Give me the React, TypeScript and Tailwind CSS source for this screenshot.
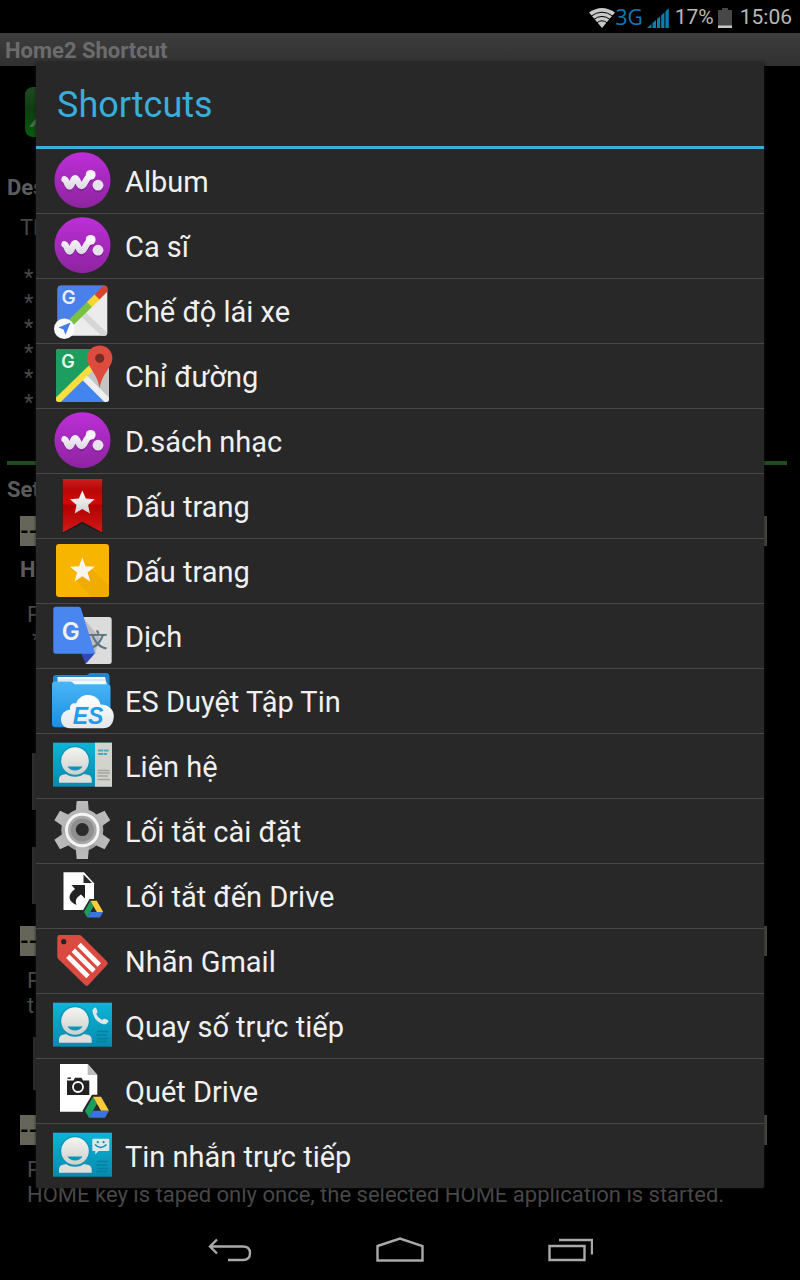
import type { ReactNode } from 'react';

interface Shortcut {
  label: string;
  icon: ReactNode;
}

const WalkmanIcon = () => (
  <svg viewBox="0 0 64 64" className="w-16 h-16 shrink-0" aria-hidden="true">
    <defs>
      <linearGradient id="walkman" x1="0" y1="0" x2="0" y2="1">
        <stop offset="0" stopColor="#bd2fd8" />
        <stop offset="1" stopColor="#8d249f" />
      </linearGradient>
      <linearGradient id="walkmanBlob" gradientUnits="userSpaceOnUse" x1="0" y1="21" x2="0" y2="42">
        <stop offset="0" stopColor="#ffffff" />
        <stop offset="1" stopColor="#d9d3df" />
      </linearGradient>
    </defs>
    <circle cx="32.5" cy="31.2" r="28" fill="url(#walkman)" />
    <g transform="translate(0 1.6)" fill="#6f1a80" stroke="#6f1a80" opacity="0.5">
      <path d="M14.3 30 L19.5 37.8 L25 29.5 L31.5 37.8 L40 27" fill="none" strokeWidth="6" strokeLinecap="round" strokeLinejoin="round" />
      <circle cx="48" cy="36.3" r="5" />
    </g>
    <path
      d="M14.5 30.3 C17 31 17 37.5 19.6 37.5 C22.5 37.5 22.5 29.2 25 29.2 C28 29.2 28.3 37 31.5 37 C35 37 35 29.5 40.5 26.5"
      fill="none"
      stroke="url(#walkmanBlob)"
      strokeWidth="6.4"
      strokeLinecap="round"
      strokeLinejoin="round"
    />
    <circle cx="40.7" cy="25.8" r="4.9" fill="#f8f5fa" />
    <circle cx="48" cy="36.2" r="5.4" fill="#e6e1ea" />
  </svg>
);

const DrivingIcon = () => (
  <svg viewBox="0 0 64 64" className="w-16 h-16 shrink-0" aria-hidden="true">
    <defs>
      <clipPath id="drivingClip">
        <rect x="7.7" y="6.7" width="49.6" height="50" rx="3" />
      </clipPath>
    </defs>
    <g clipPath="url(#drivingClip)">
      <rect x="7" y="6" width="52" height="52" fill="#ececec" />
      <path d="M34 36 L58 59" stroke="#d6d6d6" strokeWidth="6" />
      <path d="M7 6 H56 L7 54 Z" fill="#4a80ec" />
      <path d="M16 48.5 L41 24" stroke="#7ac143" strokeWidth="7" />
      <path d="M39.5 25.5 L48 17" stroke="#fdd32f" strokeWidth="7" />
      <path d="M47 18 L62 3" stroke="#d8432f" strokeWidth="7" />
    </g>
    <text x="18.7" y="25" textAnchor="middle" fontFamily="Inter, sans-serif" fontWeight="600" fontSize="19" fill="#e8f0ff">G</text>
    <circle cx="14.3" cy="49.7" r="10.3" fill="#fafafa" />
    <path d="M20.5 43.5 L8.5 48.5 L13.5 50.5 L15.5 55.8 Z" fill="#3f7de8" />
  </svg>
);

const MapsIcon = () => (
  <svg viewBox="0 0 64 64" className="w-16 h-16 shrink-0" aria-hidden="true">
    <defs>
      <clipPath id="mapsClip">
        <rect x="6" y="5" width="53" height="53" rx="3" />
      </clipPath>
    </defs>
    <g clipPath="url(#mapsClip)">
      <rect x="6" y="5" width="53" height="53" fill="#c4c4c4" />
      <path d="M6 5 H54 L33 31 L6 56 Z" fill="#1d9e60" />
      <path d="M33 33 L60 59 H6 Z" fill="#4285ee" />
      <path d="M31 30 L60 59" stroke="#eeeeee" strokeWidth="6.5" />
      <path d="M5 59 L44 21" stroke="#fede3f" strokeWidth="6.5" />
    </g>
    <text x="18" y="24.2" textAnchor="middle" fontFamily="Inter, sans-serif" fontWeight="600" fontSize="18" fill="#e6fff1">G</text>
    <path d="M49.7 1.5 C42.5 1.5 37 7 37 14.2 C37 23 47.5 29 49.7 44.5 C51.9 29 62.4 23 62.4 14.2 C62.4 7 57 1.5 49.7 1.5 Z" fill="#dd4b3e" />
    <circle cx="49.7" cy="14.3" r="4.6" fill="#792b22" />
  </svg>
);

const RibbonIcon = () => (
  <svg viewBox="0 0 64 64" className="w-16 h-16 shrink-0" aria-hidden="true">
    <defs>
      <linearGradient id="ribbon" x1="0" y1="0" x2="0" y2="1">
        <stop offset="0" stopColor="#cf1d1d" />
        <stop offset="0.2" stopColor="#b80808" />
        <stop offset="0.45" stopColor="#d40707" />
        <stop offset="0.5" stopColor="#b30000" />
        <stop offset="1" stopColor="#d21a1a" />
      </linearGradient>
      <linearGradient id="ribbonStar" x1="0" y1="0" x2="0" y2="1">
        <stop offset="0" stopColor="#ffffff" />
        <stop offset="1" stopColor="#cfcfcf" />
      </linearGradient>
    </defs>
    <path d="M12 6 H53 V60 L32.3 49.5 L12 60 Z" fill="#151515" opacity="0.7" />
    <path d="M12.7 5 H52.3 V58.5 L32.3 47.7 L12.7 58.5 Z" fill="url(#ribbon)" />
    <path d="M32.3 16.5 L35.8 24.4 L44.6 25.2 L38.1 31 L40 39.5 L32.3 35.1 L24.7 39.5 L26.5 31 L20 25.2 L28.9 24.4 Z" fill="url(#ribbonStar)" />
  </svg>
);

const BookmarkIcon = () => (
  <svg viewBox="0 0 64 64" className="w-16 h-16 shrink-0" aria-hidden="true">
    <rect x="6" y="5" width="53" height="53" rx="3" fill="#f7b500" />
    <path d="M38 27 L59 47 V55 Q59 58 56 58 H42 L25.5 41.5 Z" fill="#f0ac00" />
    <path d="M32.3 18.5 L35.6 27.3 L44.8 27.7 L37.6 33.4 L40.2 42.5 L32.3 37.3 L24.6 42.5 L27.1 33.4 L20 27.7 L29.1 27.3 Z" fill="#f8f5ee" />
  </svg>
);

const TranslateIcon = () => (
  <svg viewBox="0 0 64 64" className="w-16 h-16 shrink-0" aria-hidden="true">
    <path d="M30 13 H59 Q61.7 13 61.7 15.7 V57.5 Q61.7 60 59 60 H35.7 Z" fill="#dcdcdc" />
    <path d="M34 15 L50 34 L45 49.7 Z" fill="#bdbdc2" />
    <text x="47.5" y="44" textAnchor="middle" fontFamily='"Noto Sans CJK SC", sans-serif' fontWeight="500" fontSize="20" fill="#5a737d">文</text>
    <path d="M31 49 H45.2 L35.7 60 Z" fill="#3547b5" />
    <path d="M6 2.7 H28.5 Q30.5 2.7 31 4.5 L45.2 49.7 H6 Q3.3 49.7 3.3 47 V5.4 Q3.3 2.7 6 2.7 Z" fill="#4a86f0" />
    <text x="20.7" y="36" textAnchor="middle" fontFamily="Inter, sans-serif" fontWeight="600" fontSize="24" fill="#f2f2f2">G</text>
  </svg>
);

const ExplorerIcon = () => (
  <svg viewBox="0 0 64 64" className="w-16 h-16 shrink-0" aria-hidden="true">
    <defs>
      <linearGradient id="folder" x1="0" y1="0" x2="0" y2="1">
        <stop offset="0" stopColor="#4ab6f7" />
        <stop offset="1" stopColor="#1b8fe0" />
      </linearGradient>
      <linearGradient id="cloud" x1="0" y1="0" x2="0" y2="1">
        <stop offset="0" stopColor="#ffffff" />
        <stop offset="1" stopColor="#e3e7ea" />
      </linearGradient>
    </defs>
    <path d="M3 20 V9 Q3 6 6 6 H37 L40 4 H56 Q59.5 4 59.5 7.5 V25 H3 Z" fill="#2184cc" />
    <path d="M7.5 8 H55 L57 16 V18 H7.5 Z" fill="#f4f8fa" />
    <path d="M8 11 H56" stroke="#a8d3ef" strokeWidth="0.8" />
    <path d="M2 15 Q2 12.5 5 12.5 H20.5 Q22 12.5 23.3 14 L24.7 15.3 H57.5 Q60.5 15.3 60.5 18.5 V55 Q60.5 58.3 57 58.3 H5.5 Q2 58.3 2 55 Z" fill="url(#folder)" />
    <path d="M20 59.3 C14 59.3 11 55 11 50.5 C11 45 14.5 41.3 20 40.7 C19.5 35.5 22.5 34 26 34.4 C28.5 28.5 33 26 38 26 C44.5 26 49.5 30 50.5 35.5 C58 35.5 63.8 40 63.8 47 C63.8 54.5 59.5 59.3 53 59.3 Z" fill="url(#cloud)" />
    <text x="38" y="55" textAnchor="middle" fontFamily='"Liberation Sans", sans-serif' fontStyle="italic" fontWeight="700" fontSize="23" fill="#229be8">ES</text>
  </svg>
);

// Shared blue contact card, the children go on the right hand side
const ContactCard = ({ children }: { children: ReactNode }) => (
  <svg viewBox="0 0 64 64" className="w-16 h-16 shrink-0" aria-hidden="true">
    <defs>
      <linearGradient id="card" x1="0" y1="0" x2="0" y2="1">
        <stop offset="0" stopColor="#0cb5d8" />
        <stop offset="1" stopColor="#078aae" />
      </linearGradient>
      <linearGradient id="person" x1="0" y1="0" x2="0" y2="1">
        <stop offset="0" stopColor="#f4f4f2" />
        <stop offset="1" stopColor="#cfcfcb" />
      </linearGradient>
    </defs>
    <rect x="3" y="8.7" width="59" height="44" fill="url(#card)" />
    <path d="M9 48.7 V45 Q9.5 41 14 40.6 L19 39.5 H31 L36.5 40.6 Q41.2 41 41.7 45 V48.7 Z" fill="#dededa" />
    <circle cx="25" cy="27.3" r="15.4" fill="#0996b9" />
    <circle cx="25" cy="27" r="13.8" fill="url(#person)" />
    <path d="M17.5 32.6 H32.5 Q30 36.6 25 36.6 Q20 36.6 17.5 32.6 Z" fill="#0b96b9" />
    {children}
  </svg>
);

const ContactsIcon = () => (
  <ContactCard>
    <rect x="45" y="8.7" width="17" height="44" fill="#d3d3ce" />
    <path d="M48 16.5 H59 M48 20 H57" stroke="#48a9c4" strokeWidth="2" strokeDasharray="5 0.6" />
    <path d="M47.5 36.5 H59.5 M47.5 39 H60 M47.5 42 H58 M47.5 45.5 H60" stroke="#a2a29e" strokeWidth="1.3" />
  </ContactCard>
);

const DialIcon = () => (
  <ContactCard>
    <path d="M47 37.5 H58 M46 41 H57 M47 44.5 H58 M46 47.5 H57" stroke="#067f9f" strokeWidth="1.6" />
    <path d="M42.3 16 L45 13.6 Q46.3 13.4 47.5 17.4 Q47.2 19 46.2 19.8 Q48 24 52.3 26 Q53.2 24.7 54.7 24.8 Q58.5 25.8 58.6 27.5 Q56.5 30.6 53.4 30.2 Q43.5 27.5 42.3 16 Z" fill="#dfe6e6" />
  </ContactCard>
);

const MessageIcon = () => (
  <ContactCard>
    <path d="M47 37.5 H58 M46 41 H57 M47 44.5 H58 M46 47.5 H57" stroke="#067f9f" strokeWidth="1.6" />
    <path d="M43.3 14.7 H58.3 Q59.3 14.7 59.3 15.7 V26 Q59.3 27 58.3 27 H48.5 L45.3 30.5 V27 H43.3 Q42.3 27 42.3 26 V15.7 Q42.3 14.7 43.3 14.7 Z" fill="#dfe6e6" />
    <path d="M45 20.5 Q50.7 26.5 56.5 20.5" fill="none" stroke="#078fb2" strokeWidth="1.4" />
    <circle cx="47.8" cy="18.2" r="1.1" fill="#078fb2" />
    <circle cx="53.6" cy="18.2" r="1.1" fill="#078fb2" />
  </ContactCard>
);

const GearIcon = () => (
  <svg viewBox="0 0 64 64" className="w-16 h-16 shrink-0" aria-hidden="true">
    <defs>
      <linearGradient id="gear" gradientUnits="userSpaceOnUse" x1="0" y1="2" x2="0" y2="60">
        <stop offset="0" stopColor="#bcbcbc" />
        <stop offset="1" stopColor="#989898" />
      </linearGradient>
    </defs>
    <g fill="url(#gear)">
      <circle cx="32.3" cy="31" r="21" />
      {[0, 60, 120, 180, 240, 300].map((angle) => (
        <path key={angle} d="M26.7 2 H37.9 L39 14 H25.6 Z" transform={`rotate(${angle} 32.3 31)`} />
      ))}
    </g>
    <circle cx="32.3" cy="31" r="15.8" fill="#a9a9a9" stroke="#f4f4f4" strokeWidth="3" />
    <circle cx="32.3" cy="31" r="11.5" fill="#8e8e8e" />
    <circle cx="32.3" cy="30.6" r="6.5" fill="#2b2b2b" />
  </svg>
);

const DriveLogo = () => (
  <>
    <path d="M7 -2 H17 L26 14 L22 23 H3 L-2.5 14 Z" fill="#282828" />
    <path d="M8 0 L12 7 L4 21 L0 14 Z" fill="#1b9e5d" />
    <path d="M8 0 H16 L24 14 H16 Z" fill="#fbcb3c" />
    <path d="M8 14 H24 L20 21 H4 Z" fill="#3b74e0" />
  </>
);

const DriveShortcutIcon = () => (
  <svg viewBox="0 0 64 64" className="w-16 h-16 shrink-0" aria-hidden="true">
    <path d="M13.5 8.3 H34 L44 19.3 V46 H13.5 Z" fill="#ffffff" />
    <path d="M33.5 10.5 V19 H42 Z" fill="#282828" />
    <path d="M21.5 21 H35 V34.5 L31 30.5 C26 34 25 36 26.5 41 C18 37.5 17 31 25 25 Z" fill="#222222" />
    <g transform="translate(34 36.7) scale(0.8)">
      <DriveLogo />
    </g>
  </svg>
);

const DriveScanIcon = () => (
  <svg viewBox="0 0 64 64" className="w-16 h-16 shrink-0" aria-hidden="true">
    <path d="M10 5 H37.7 L47.3 16 V52.7 H10 Z" fill="#ffffff" />
    <path d="M37.7 5 V16 H47.3 Z" fill="#bcbcbc" />
    <path d="M17 21.5 H23.5 L25 18.7 H31.5 L33 21.5 H39.3 V36 H17 Z" fill="#222222" />
    <path d="M17.5 19.2 H21" stroke="#222222" strokeWidth="1.4" />
    <circle cx="28" cy="28" r="5" fill="#222222" stroke="#ffffff" strokeWidth="1.8" />
    <g transform="translate(35 37.7)">
      <DriveLogo />
    </g>
  </svg>
);

const LabelIcon = () => (
  <svg viewBox="0 0 64 64" className="w-16 h-16 shrink-0" aria-hidden="true">
    <path d="M9.5 6 H29 Q30.5 6 31.5 7 L57 32.5 Q58.7 34.3 57 36 L38.4 56 Q36.7 57.7 35 56 L8.3 30 Q7.3 29 7.3 27.5 V8.2 Q7.3 6 9.5 6 Z" fill="#db4a40" />
    <circle cx="13.7" cy="12.7" r="2.6" fill="#242424" />
    <path d="M17.8 27.3 L38 47.5 M23.3 21.2 L44 42 M29 15.5 L49.3 36" stroke="#ffffff" strokeWidth="4.8" />
  </svg>
);

const shortcuts: Shortcut[] = [
  { label: 'Album', icon: <WalkmanIcon /> },
  { label: 'Ca sĩ', icon: <WalkmanIcon /> },
  { label: 'Chế độ lái xe', icon: <DrivingIcon /> },
  { label: 'Chỉ đường', icon: <MapsIcon /> },
  { label: 'D.sách nhạc', icon: <WalkmanIcon /> },
  { label: 'Dấu trang', icon: <RibbonIcon /> },
  { label: 'Dấu trang', icon: <BookmarkIcon /> },
  { label: 'Dịch', icon: <TranslateIcon /> },
  { label: 'ES Duyệt Tập Tin', icon: <ExplorerIcon /> },
  { label: 'Liên hệ', icon: <ContactsIcon /> },
  { label: 'Lối tắt cài đặt', icon: <GearIcon /> },
  { label: 'Lối tắt đến Drive', icon: <DriveShortcutIcon /> },
  { label: 'Nhãn Gmail', icon: <LabelIcon /> },
  { label: 'Quay số trực tiếp', icon: <DialIcon /> },
  { label: 'Quét Drive', icon: <DriveScanIcon /> },
  { label: 'Tin nhắn trực tiếp', icon: <MessageIcon /> },
];

const StatusBar = () => (
  <header className="h-[33px] pt-0.5 flex items-center justify-end pr-2 text-[21px] leading-[31px] text-[#b9b9b9]">
    <svg viewBox="0 0 26 20" className="w-[26px] h-5" aria-hidden="true">
      <path d="M0 4.6 Q13 -4.4 26 4.6 L13 20 Z" fill="#c8c8c8" />
      <path d="M2 8.2 Q13 0.2 24 8.2 M4.6 11.6 Q13 5.2 21.4 11.6 M7.6 15 Q13 10.6 18.4 15" fill="none" stroke="#000000" strokeWidth="1" />
    </svg>
    <span className="font-['Open_Sans',sans-serif] text-[#0c7db2] mr-1">3G</span>
    <svg viewBox="0 0 22 20" className="w-[22px] h-5 mr-1.5" aria-hidden="true">
      <path d="M0 20 L4.5 16 V20 Z M5.5 15 L9 12 V20 H5.5 Z M10 11 L13.2 8.3 V20 H10 Z M14.2 7.2 L17.4 4.4 V20 H14.2 Z M18.4 3.4 L21.8 0.2 V20 H18.4 Z" fill="#0c7db2" />
    </svg>
    <span className="mr-1">17%</span>
    <svg viewBox="0 0 14 20" className="w-3.5 h-5 mr-2" aria-hidden="true">
      <path d="M4 0 H10 V2 H14 V18 H0 V2 H4 Z" fill="#474747" />
      <rect y="17.5" width="14" height="2.5" fill="#c8c8c8" />
    </svg>
    <span>15:06</span>
  </header>
);

const Strip = () => (
  <div className="ml-5 mr-[33px] h-[30px] flex items-center bg-linear-to-r from-[#66655a] to-[#47473f] font-bold text-black">
    --
  </div>
);

const SettingsPage = () => (
  <main className="flex-1 text-[22px] leading-[25px] text-[#484848]">
    <svg viewBox="0 0 50 50" className="mt-[21px] ml-[25px] w-[50px] h-[50px]" aria-hidden="true">
      <defs>
        <linearGradient id="appIcon" x1="0" y1="0" x2="0" y2="1">
          <stop offset="0" stopColor="#1f4a24" />
          <stop offset="0.45" stopColor="#0c3d10" />
          <stop offset="1" stopColor="#085c0b" />
        </linearGradient>
      </defs>
      <rect width="50" height="50" rx="8" fill="url(#appIcon)" />
      <path d="M4 40 L12 30 V36 L8 40 Z" fill="#4b6b4d" />
    </svg>
    <h2 className="mt-[38px] ml-[7px] font-bold text-[#5c5c5c]">Des</h2>
    <p className="mt-[15px] ml-5">Th</p>
    <ul className="mt-[25px] ml-6">
      <li>*</li>
      <li>*</li>
      <li>*</li>
      <li>*</li>
      <li>*</li>
      <li>*</li>
    </ul>
    <div className="mt-[46px] ml-[7px] mr-[13px] h-1 bg-[#1d4f1d]"></div>
    <h2 className="mt-3 mb-3.5 ml-[7px] font-bold text-[#5c5c5c]">Set</h2>
    <Strip />
    <h3 className="mt-[11px] ml-5 font-bold text-[#5c5c5c]">H</h3>
    <p className="mt-5 ml-[27px]">P</p>
    <p className="ml-8">*</p>
    <div className="mt-[101px] ml-8 mr-9 h-[57px] bg-[#2e2e2e]"></div>
    <div className="mt-[37px] mb-[22px] ml-8 mr-9 h-[57px] bg-[#2e2e2e]"></div>
    <Strip />
    <p className="mt-3 ml-[27px]">P</p>
    <p className="ml-[27px]">t</p>
    <div className="mt-[19px] mb-[25px] ml-[33px] mr-9 h-[53px] bg-[#2e2e2e]"></div>
    <Strip />
    <p className="mt-3 ml-[27px]">P</p>
    <p className="ml-[27px]">HOME key is taped only once, the selected HOME application is started.</p>
  </main>
);

const NavigationBar = () => (
  <nav className="h-[60px] flex justify-center">
    <button aria-label="Back" className="w-[170px] flex items-center justify-center">
      <svg viewBox="0 0 44 26" className="w-11 h-[26px]" fill="none" stroke="#a9a9a9" strokeWidth="2.4">
        <path d="M9 2.5 L2 9.5 L9 16.5 M2 9.5 H35 Q42 9.5 42 16 Q42 23 35 23 H20" />
      </svg>
    </button>
    <button aria-label="Home" className="w-[170px] flex items-center justify-center">
      <svg viewBox="0 0 48 26" className="w-12 h-[26px]" fill="none" stroke="#a9a9a9" strokeWidth="2.4">
        <path d="M1.5 9 L24 1.5 L46.5 9 V23.5 H1.5 Z" />
      </svg>
    </button>
    <button aria-label="Recent apps" className="w-[170px] flex items-center justify-center">
      <svg viewBox="0 0 46 26" className="w-[46px] h-[26px]" fill="none" stroke="#a9a9a9" strokeWidth="2.4">
        <path d="M2.5 9 H37.5 V23 H2.5 Z M12 3 H45 V17.5" />
      </svg>
    </button>
  </nav>
);

const ShortcutsDialog = () => (
  <div
    role="dialog"
    aria-labelledby="dialog-title"
    className="absolute inset-x-9 top-[62px] rounded-xs bg-[#282828] shadow-[0_0_3px_#1c1c1c]"
  >
    <h2 id="dialog-title" className="h-[87px] pt-0.5 px-[21px] flex items-center border-b-3 border-[#3aaddc] text-4xl text-[#3aaddc]">
      Shortcuts
    </h2>
    <ul className="divide-y divide-[#484848]">
      {shortcuts.map((shortcut, index) => (
        <li key={index}>
          <button className="w-full h-16 pl-3.5 flex items-center gap-[11px] text-left text-[29px] text-[#f0f0f0]">
            {shortcut.icon}
            <span className="pt-1">{shortcut.label}</span>
          </button>
        </li>
      ))}
    </ul>
  </div>
);

const App = () => {
  return (
    <div className="relative min-h-screen flex flex-col overflow-hidden bg-black font-[Roboto,sans-serif]">
      <StatusBar />
      <h1 className="h-[33px] pt-0.5 px-[5px] flex items-center bg-linear-to-b from-[#3e3e3e] to-[#303030] text-[22px] font-bold text-[#6c6c6c]">
        Home2 Shortcut
      </h1>
      <SettingsPage />
      <NavigationBar />
      <ShortcutsDialog />
    </div>
  );
};

export default App;
